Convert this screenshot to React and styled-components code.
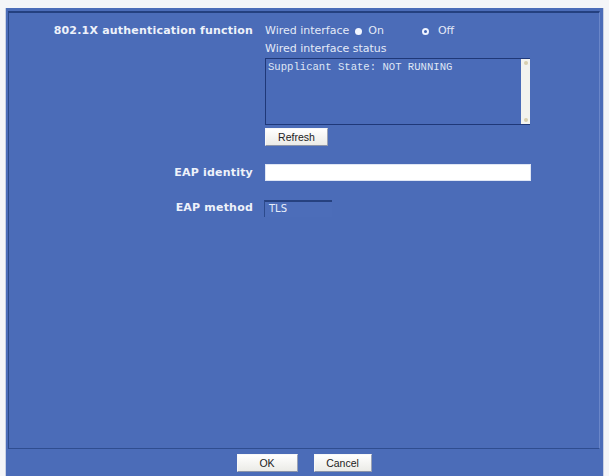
import React from "react";
import styled, { createGlobalStyle } from "styled-components";

const Global = createGlobalStyle`
  html, body { margin: 0; padding: 0; background: #f4f5f8; }
  body { font-family: Tahoma, "DejaVu Sans", Verdana, sans-serif; }
  #root { height: 476px; overflow: hidden; }
`;

const Frame = styled.div`
  margin: 8px 6px 0 6px;
  height: 468px;
  background: #4b6cb8;
  box-shadow: -1px 0 0 #c9d1e3, 1px 0 0 #c9d1e3;
  display: flex;
  flex-direction: column;
  padding: 3px 3px 0 2px;
  box-sizing: border-box;
`;

const Panel = styled.div`
  height: 438px;
  box-sizing: border-box;
  border-top: 2px solid #24407f;
  border-left: 1px solid #2c4a8c;
  border-right: 1px solid #6a86c8;
  border-bottom: 1px solid #2f4d90;
  padding-top: 10px;
`;

const Grid = styled.div`
  display: grid;
  grid-template-columns: 244px 1fr;
  column-gap: 12px;
  align-items: start;
`;

const Label = styled.div`
  text-align: right;
  color: #eef2fa;
  font-family: "DejaVu Sans", Verdana, sans-serif;
  font-weight: bold;
  font-size: 11px;
  letter-spacing: 0.2px;
  line-height: 16px;
  margin-top: ${(p) => p.$top || 0}px;
`;

const Field = styled.div`
  display: flex;
  flex-direction: column;
  align-items: flex-start;
  margin-top: ${(p) => p.$top || 0}px;
`;

const Text = styled.span`
  color: #e4eaf7;
  font-family: "DejaVu Sans", Verdana, sans-serif;
  font-size: 11px;
  line-height: 16px;
  margin-top: ${(p) => p.$top || 0}px;
`;

const RadioLine = styled.div`
  display: flex;
  align-items: center;
  height: 16px;
`;

const Radio = styled.span`
  display: inline-block;
  box-sizing: border-box;
  width: 7px;
  height: 7px;
  border-radius: 50%;
  margin: 0 ${(p) => p.$right}px 0 ${(p) => p.$left}px;
  background: ${(p) => (p.$checked ? "#f2f6ff" : "#3f63b3")};
  border: ${(p) => (p.$checked ? "none" : "2px solid #eef3ff")};
`;

const StatusBox = styled.div`
  position: relative;
  margin-top: 1px;
  width: 265px;
  height: 67px;
  box-sizing: border-box;
  border: 1px solid #1f3878;
  border-right: none;
  background: #4a6bb8;
  padding: 2px 0 0 2px;
  font-family: "Liberation Mono", "DejaVu Sans Mono", monospace;
  font-size: 10.6px;
  color: #dfe6f5;
  line-height: 12px;
`;

const ScrollBar = styled.div`
  position: absolute;
  top: 0;
  right: 0;
  bottom: 0;
  width: 9px;
  background: #f3f3ef;
  display: flex;
  flex-direction: column;
  justify-content: space-between;
  align-items: center;
  padding: 2px 0;
  box-sizing: border-box;
`;

const Arrow = styled.span`
  width: 4px;
  height: 4px;
  border-radius: 50%;
  background: #d9cfae;
`;

const Button = styled.button`
  box-sizing: border-box;
  width: ${(p) => p.$w}px;
  height: 18px;
  margin-top: ${(p) => p.$top || 0}px;
  padding: 0;
  background: linear-gradient(#ffffff, #ebebe7);
  border: 1px solid #f8f8f8;
  border-right-color: #9aa2b4;
  border-bottom-color: #8c94a8;
  color: #222;
  font-family: "Liberation Sans", Arial, sans-serif;
  font-size: 10.5px;
`;

const TextInput = styled.div`
  width: 266px;
  height: 17px;
  box-sizing: border-box;
  background: #ffffff;
  border: 1px solid #dfe6f4;
`;

const MethodBox = styled.div`
  width: 68px;
  height: 17px;
  box-sizing: border-box;
  margin-left: -1px;
  border-top: 2px solid #26417f;
  border-left: 1px solid #2c4a8c;
  background: #4c6db9;
  color: #e8eefa;
  font-family: "DejaVu Sans", Verdana, sans-serif;
  font-size: 10px;
  line-height: 13px;
  padding-left: 4px;
`;

const ButtonBar = styled.div`
  flex: 1;
  display: flex;
  justify-content: center;
  align-items: center;
  gap: 16px;
  padding: 1px 0 0 0;
`;

export default function App() {
  return (
    <>
      <Global />
      <Frame>
        <Panel>
          <Grid>
            <Label>802.1X authentication function</Label>
            <Field>
              <RadioLine>
                <Text>Wired interface</Text>
                <Radio $checked $left={6} $right={6} />
                <Text>On</Text>
                <Radio $left={38} $right={9} />
                <Text>Off</Text>
              </RadioLine>
              <Text $top={2}>Wired interface status</Text>
              <StatusBox>
                Supplicant State: NOT RUNNING
                <ScrollBar>
                  <Arrow />
                  <Arrow />
                </ScrollBar>
              </StatusBox>
              <Button $w={63} $top={3}>Refresh</Button>
            </Field>

            <Label $top={19}>EAP identity</Label>
            <Field $top={18}>
              <TextInput />
            </Field>

            <Label $top={19}>EAP method</Label>
            <Field $top={19}>
              <MethodBox>TLS</MethodBox>
            </Field>
          </Grid>
        </Panel>
        <ButtonBar>
          <Button $w={61}>OK</Button>
          <Button $w={58}>Cancel</Button>
        </ButtonBar>
      </Frame>
    </>
  );
}
